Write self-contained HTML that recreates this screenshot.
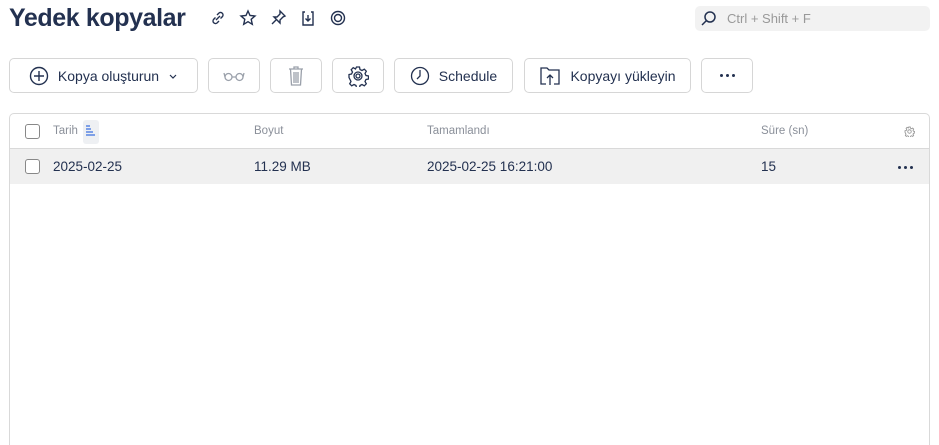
<!DOCTYPE html>
<html><head><meta charset="utf-8"><style>
*{box-sizing:border-box;margin:0;padding:0}
html,body{width:939px;height:445px;overflow:hidden}
body{background:#fff;font-family:"Liberation Sans",sans-serif;color:#1f2d4d;position:relative}
.abs{position:absolute}
h1{position:absolute;left:9px;top:4px;font-size:25px;font-weight:bold;color:#233150;letter-spacing:-0.4px}
.ic{position:absolute;top:9px;width:18px;height:18px}
.search{position:absolute;left:695px;top:6px;width:235px;height:25px;background:#f2f2f2;border-radius:5px;font-size:13px;color:#999;padding:5px 0 0 32px}
.btn{position:absolute;top:58px;height:35px;border:1px solid #d6d6d6;border-radius:5px;font-size:14px;color:#233150;display:flex;align-items:center;justify-content:center;gap:9px}
.tbl{position:absolute;left:9px;top:113px;width:921px;height:332px;border:1px solid #d9d9d9;border-bottom:none;border-radius:5px 5px 0 0}
.hdr{position:absolute;left:0;top:0;width:100%;height:35px;border-bottom:1px solid #d9d9d9;font-size:11.5px;color:#8a8f99}
.row{position:absolute;left:0;top:35px;width:100%;height:35px;background:#f0f0f0;font-size:13.5px;color:#233150}
.cb{position:absolute;left:15px;width:15px;height:15px;border:1.3px solid #888;border-radius:3px;background:#fff}
.t{position:absolute;top:11px}
.dot{position:absolute;width:3px;height:3px;border-radius:50%;background:#233150}
</style></head><body>
<h1>Yedek kopyalar</h1>
<svg class="ic" style="left:209px" viewBox="0 0 18 18" fill="none" stroke="#233150" stroke-width="1.4"><path d="M8 6l2-2a2.5 2.5 0 013.5 3.5l-2 2M10 12l-2 2a2.5 2.5 0 01-3.5-3.5l2-2M7 11l4-4"/></svg>
<svg class="ic" style="left:239px" viewBox="0 0 18 18" fill="none" stroke="#233150" stroke-width="1.4"><path d="M9 2l2 4.5 5 .5-3.8 3.3 1.1 5L9 12.7 4.7 15.3l1.1-5L2 7l5-.5z"/></svg>
<svg class="ic" style="left:269px" viewBox="0 0 18 18" fill="none" stroke="#233150" stroke-width="1.4"><path d="M11 2l5 5-2 1-3 3 0 3-6-6 3 0 3-3zM7 11l-4 4"/></svg>
<svg class="ic" style="left:299px" viewBox="0 0 18 18" fill="none" stroke="#233150" stroke-width="1.4"><path d="M6 3h-2v13h10V3h-2M9 6v6M6.5 9.5L9 12l2.5-2.5"/></svg>
<svg class="ic" style="left:329px" viewBox="0 0 18 18" fill="none" stroke="#233150" stroke-width="1.4"><circle cx="9" cy="9" r="6.5"/><circle cx="9" cy="9" r="3.5"/></svg>
<div class="search">Ctrl + Shift + F</div>
<svg class="abs" style="left:700px;top:10px" width="17" height="17" viewBox="0 0 17 17" fill="none" stroke="#233150" stroke-width="1.5"><circle cx="10" cy="7" r="5"/><path d="M6.5 10.5L2 15"/></svg>

<div class="btn" style="left:9px;width:189px"><svg width="20" height="20" viewBox="0 0 20 20" fill="none" stroke="#233150" stroke-width="1.4"><circle cx="10" cy="10" r="8.5"/><path d="M10 5v10M5 10h10"/></svg><span>Kopya oluşturun</span><svg width="10" height="10" viewBox="0 0 10 10" fill="none" stroke="#233150" stroke-width="1.2"><path d="M2 4l3 3 3-3"/></svg></div>
<div class="btn" style="left:208px;width:52px"><svg width="22" height="12" viewBox="0 0 22 12" fill="none" stroke="#9aa0aa" stroke-width="1.3"><circle cx="5.5" cy="7" r="3.5"/><circle cx="16.5" cy="7" r="3.5"/><path d="M9 7h4M2 7L1 3M20 7l1-4"/></svg></div>
<div class="btn" style="left:270px;width:52px"><svg width="18" height="22" viewBox="0 0 18 22" fill="none" stroke="#9aa0aa" stroke-width="1.3"><path d="M2 4h14M7 4V2h4v2M3.5 4l1 16h9l1-16M7 7v11M9 7v11M11 7v11"/></svg></div>
<div class="btn" style="left:332px;width:52px"><svg width="22" height="22" viewBox="0 0 22 22" fill="none" stroke="#233150" stroke-width="1.3"><path d="M9.5 2h3l.5 2.5 2 1 2.3-1.3 2 2-1.3 2.3 1 2 2.5.5v3l-2.5.5-1 2 1.3 2.3-2 2-2.3-1.3-2 1-.5 2.5h-3l-.5-2.5-2-1-2.3 1.3-2-2 1.3-2.3-1-2L2 12.5v-3l2.5-.5 1-2-1.3-2.3 2-2L8.5 4 9 3z"/><circle cx="11" cy="11" r="4"/><circle cx="11" cy="11" r="2"/></svg></div>
<div class="btn" style="left:394px;width:119px"><svg width="20" height="20" viewBox="0 0 20 20" fill="none" stroke="#233150" stroke-width="1.3"><circle cx="10" cy="10" r="8.5"/><path d="M10 4v6l-3 3"/></svg><span>Schedule</span></div>
<div class="btn" style="left:524px;width:167px"><svg width="22" height="20" viewBox="0 0 22 20" fill="none" stroke="#233150" stroke-width="1.3"><path d="M7 18H2V2h6l2 2h10v14h-5M11 19V9M8 12l3-3 3 3"/></svg><span>Kopyayı yükleyin</span></div>
<div class="btn" style="left:701px;width:52px"><div class="dot" style="position:static"></div><div class="dot" style="position:static;margin-left:-6px"></div><div class="dot" style="position:static;margin-left:-6px"></div></div>

<div class="tbl">
<div class="hdr">
<div class="cb" style="top:10px"></div>
<span class="t" style="left:43px">Tarih</span>
<div class="abs" style="left:73px;top:6px;width:16px;height:24px;background:#eef0f3;border-radius:3px"></div>
<svg class="abs" style="left:75px;top:10px" width="12" height="14" viewBox="0 0 12 14" stroke="#3b6fe0" stroke-width="1.2"><path d="M1 2h4M1 5h5M1 8h7M1 11h9"/></svg>
<span class="t" style="left:244px">Boyut</span>
<span class="t" style="left:417px">Tamamlandı</span>
<span class="t" style="left:751px">Süre (sn)</span>
<svg class="abs" style="left:894px;top:12px" width="11" height="11" viewBox="0 0 22 22" fill="none" stroke="#999" stroke-width="1.8"><path d="M9.5 2h3l.5 2.5 2 1 2.3-1.3 2 2-1.3 2.3 1 2 2.5.5v3l-2.5.5-1 2 1.3 2.3-2 2-2.3-1.3-2 1-.5 2.5h-3l-.5-2.5-2-1-2.3 1.3-2-2 1.3-2.3-1-2L2 12.5v-3l2.5-.5 1-2-1.3-2.3 2-2L8.5 4 9 3z"/><circle cx="11" cy="11" r="3.5"/></svg>
</div>
<div class="row">
<div class="cb" style="top:10px"></div>
<span class="t" style="left:43px;top:10px">2025-02-25</span>
<span class="t" style="left:244px;top:10px">11.29 MB</span>
<span class="t" style="left:417px;top:10px">2025-02-25 16:21:00</span>
<span class="t" style="left:751px;top:10px">15</span>
<div class="dot" style="left:888px;top:17px"></div><div class="dot" style="left:894px;top:17px"></div><div class="dot" style="left:900px;top:17px"></div>
</div>
</div>
</body></html>
